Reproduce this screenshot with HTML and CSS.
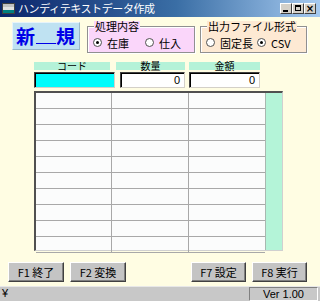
FILE: index.html
```html
<!DOCTYPE html>
<html lang="ja">
<head>
    <meta charset="UTF-8">
    <title>ハンディテキストデータ作成</title>
    <link rel="stylesheet" href="styles.css">
</head>
<body>
    <div class="window">
        <div class="titlebar">
            <span class="app-icon"></span>
            <span class="title">ハンディテキストデータ作成</span>
            <div class="caption-btns">
                <span class="cap cap-min"></span>
                <span class="cap cap-max"></span>
                <span class="cap cap-close">×</span>
            </div>
        </div>

        <div class="client">
            <div class="top-row">
                <div class="mode">新<span class="mode-gap">　</span>規</div>
                <div class="group group-pink">
                    <span class="legend">処理内容</span>
                    <label class="radio"><span class="dot on"></span>在庫</label>
                    <label class="radio"><span class="dot"></span>仕入</label>
                </div>
                <div class="group group-peach">
                    <span class="legend">出力ファイル形式</span>
                    <label class="radio"><span class="dot"></span>固定長</label>
                    <label class="radio"><span class="dot on"></span>CSV</label>
                </div>
            </div>

            <div class="captions">
                <div class="caption cap-code">コード</div>
                <div class="caption cap-qty">数量</div>
                <div class="caption cap-amt">金額</div>
            </div>
            <div class="inputs">
                <div class="input in-code"></div>
                <div class="input in-qty">0</div>
                <div class="input in-amt">0</div>
            </div>

            <div class="sheet">
                <div class="cells" id="cells"></div>
                <div class="sheet-side"></div>
            </div>

            <div class="fkeys">
                <button class="fkey">F1 終了</button>
                <button class="fkey">F2 変換</button>
                <span class="spacer"></span>
                <button class="fkey">F7 設定</button>
                <button class="fkey">F8 実行</button>
            </div>
        </div>

        <div class="statusbar">
            <span class="st-main">¥</span>
            <span class="st-ver">Ver 1.00</span>
        </div>
    </div>

    <script>
        // 10 rows x 3 columns of empty cells
        const cells = document.getElementById('cells');
        for (let i = 0; i < 30; i++) {
            const c = document.createElement('div');
            c.className = 'cell';
            cells.appendChild(c);
        }
    </script>
</body>
</html>
```

FILE: styles.css
```css
body {
    margin: 0;
    padding: 0;
    font-family: "Noto Sans CJK JP", "DejaVu Sans", sans-serif;
    font-size: 11px;
    color: #000;
    background: #fffde3;
}
.window {
    width: 320px;
    height: 301px;
    display: flex;
    flex-direction: column;
    background: #fffde3;
    overflow: hidden;
}
.titlebar {
    height: 17px;
    flex: none;
    display: flex;
    align-items: center;
    background: linear-gradient(90deg, #0a246a 0%, #3a6ea5 55%, #a6caf0 100%);
    color: #fff;
}
.app-icon {
    width: 11px;
    height: 9px;
    margin: 0 3px 0 2px;
    background: linear-gradient(180deg, #c0c0c0 0 3px, #e0e0e0 3px 6px, #008080 6px);
    border: 1px solid #404040;
}
.title {
    font-size: 11px;
    line-height: 17px;
    letter-spacing: -0.4px;
}
.caption-btns {
    margin-left: auto;
    margin-right: 4px;
    display: flex;
}
.cap {
    width: 12px;
    height: 11px;
    box-sizing: border-box;
    background: #d4d0c8;
    border: 1px solid;
    border-color: #fff #404040 #404040 #fff;
    color: #000;
    font-family: "DejaVu Sans", sans-serif;
    font-size: 10px;
    line-height: 9px;
    text-align: center;
    font-weight: bold;
    position: relative;
}
.cap-min::after {
    content: '';
    position: absolute;
    left: 2px;
    bottom: 1px;
    width: 5px;
    height: 2px;
    background: #000;
}
.cap-max::after {
    content: '';
    position: absolute;
    left: 2px;
    top: 1px;
    width: 4px;
    height: 3px;
    border: 1px solid #000;
    border-top-width: 2px;
}
.client {
    flex: 1;
    display: flex;
    flex-direction: column;
}
.top-row {
    display: flex;
    align-items: flex-start;
    margin-top: 5px;
    height: 31px;
}
.mode {
    margin-left: 12px;
    width: 68px;
    height: 28px;
    box-sizing: border-box;
    background: #bfe2f2;
    border: 1px solid;
    border-color: #e8f4fa #98b8c8 #98b8c8 #e8f4fa;
    color: #0000e8;
    font-size: 19px;
    font-weight: bold;
    line-height: 26px;
    text-align: center;
    letter-spacing: 1px;
}
.mode-gap {
    text-decoration: underline;
    text-decoration-thickness: 1px;
    text-underline-offset: -1px;
}
.group {
    position: relative;
    margin-top: 4px;
    height: 27px;
    box-sizing: border-box;
    border: 1px solid #909090;
    box-shadow: inset 1px 1px 0 #fff, 1px 1px 0 #fff;
    padding: 6px 0 0 5px;
    display: flex;
    align-items: center;
}
.legend {
    position: absolute;
    left: 6px;
    top: -6px;
    padding: 0 1px;
    font-size: 11px;
    line-height: 11px;
}
.group-pink {
    margin-left: 7px;
    width: 108px;
    background: #fad6fa;
}
.group-pink .legend {
    background: #fad6fa;
}
.group-peach {
    margin-left: 5px;
    width: 107px;
    background: #fde9d3;
}
.group-peach .legend {
    background: #fde9d3;
}
.radio {
    display: flex;
    align-items: center;
    font-size: 11px;
    line-height: 12px;
}
.group-pink .radio:first-of-type {
    width: 52px;
}
.group-peach .radio:first-of-type {
    width: 51px;
}
.dot {
    width: 9px;
    height: 9px;
    box-sizing: border-box;
    border: 1px solid #505050;
    border-radius: 50%;
    background: #fff;
    margin-right: 5px;
    position: relative;
}
.dot.on::after {
    content: '';
    position: absolute;
    left: 2px;
    top: 2px;
    width: 3px;
    height: 3px;
    border-radius: 50%;
    background: #000;
}
.captions {
    display: flex;
    margin-top: 9px;
    height: 8px;
}
.caption {
    background: #b4f2d8;
    font-size: 10px;
    line-height: 8px;
    text-align: center;
}
.cap-code {
    margin-left: 34px;
    width: 76px;
}
.cap-qty {
    margin-left: 6px;
    width: 69px;
}
.cap-amt {
    margin-left: 4px;
    width: 71px;
}
.inputs {
    display: flex;
    margin-top: 2px;
    height: 16px;
}
.input {
    height: 16px;
    box-sizing: border-box;
    border: 1px solid;
    border-color: #404040 #d4d0c8 #d4d0c8 #404040;
    box-shadow: inset 1px 1px 0 #000;
    background: #fff;
    text-align: right;
    padding-right: 4px;
    font-family: "Liberation Sans", sans-serif;
    font-size: 11px;
    line-height: 14px;
}
.in-code {
    margin-left: 34px;
    width: 81px;
    background: #00fcfc;
}
.in-qty {
    margin-left: 5px;
    width: 65px;
}
.in-amt {
    margin-left: 4px;
    width: 71px;
}
.sheet {
    margin-left: 34px;
    margin-top: 3px;
    width: 249px;
    height: 160px;
    box-sizing: border-box;
    display: flex;
    border-left: 2px solid #505050;
    border-top: 2px solid #505050;
    border-bottom: 1px solid #d0d0d0;
    border-right: 1px solid #d0d0d0;
    background: #fbfcfc;
}
.cells {
    width: 229px;
    display: grid;
    grid-template-columns: 76px 77px 76px;
    grid-template-rows: repeat(10, 16px);
}
.cell {
    box-sizing: border-box;
    border-right: 1px solid #a8a8a8;
    border-bottom: 1px solid #a8a8a8;
}
.cell:nth-child(3n) {
    border-right: none;
}
.sheet-side {
    flex: 1;
    background: #b4f4d8;
    border-left: 1px solid #a8b8b0;
}
.fkeys {
    display: flex;
    margin-top: 11px;
    padding: 0 13px 0 8px;
    gap: 6px;
}
.spacer {
    flex: 1;
}
.fkey {
    width: 56px;
    height: 20px;
    padding: 0;
    box-sizing: border-box;
    background: #c4c4c4;
    border: 1px solid;
    border-color: #fff #404040 #404040 #fff;
    box-shadow: inset -1px -1px 0 #808080;
    font-family: "Noto Sans CJK JP", "DejaVu Sans", sans-serif;
    font-size: 11px;
    line-height: 17px;
    color: #000;
}
.fkey:nth-of-type(3),
.fkey:nth-of-type(4) {
    width: 55px;
}
.statusbar {
    height: 14px;
    flex: none;
    display: flex;
    background: #c8c8c8;
    border-top: 1px solid #e8e8e8;
    font-size: 11px;
    line-height: 13px;
}
.st-main {
    flex: 1;
    padding-left: 2px;
    font-family: "Liberation Sans", sans-serif;
}
.st-ver {
    width: 69px;
    box-sizing: border-box;
    margin-right: 2px;
    border: 1px solid;
    border-color: #808080 #fff #fff #808080;
    text-align: center;
    font-family: "Liberation Sans", sans-serif;
    font-size: 11px;
    line-height: 12px;
}
```
